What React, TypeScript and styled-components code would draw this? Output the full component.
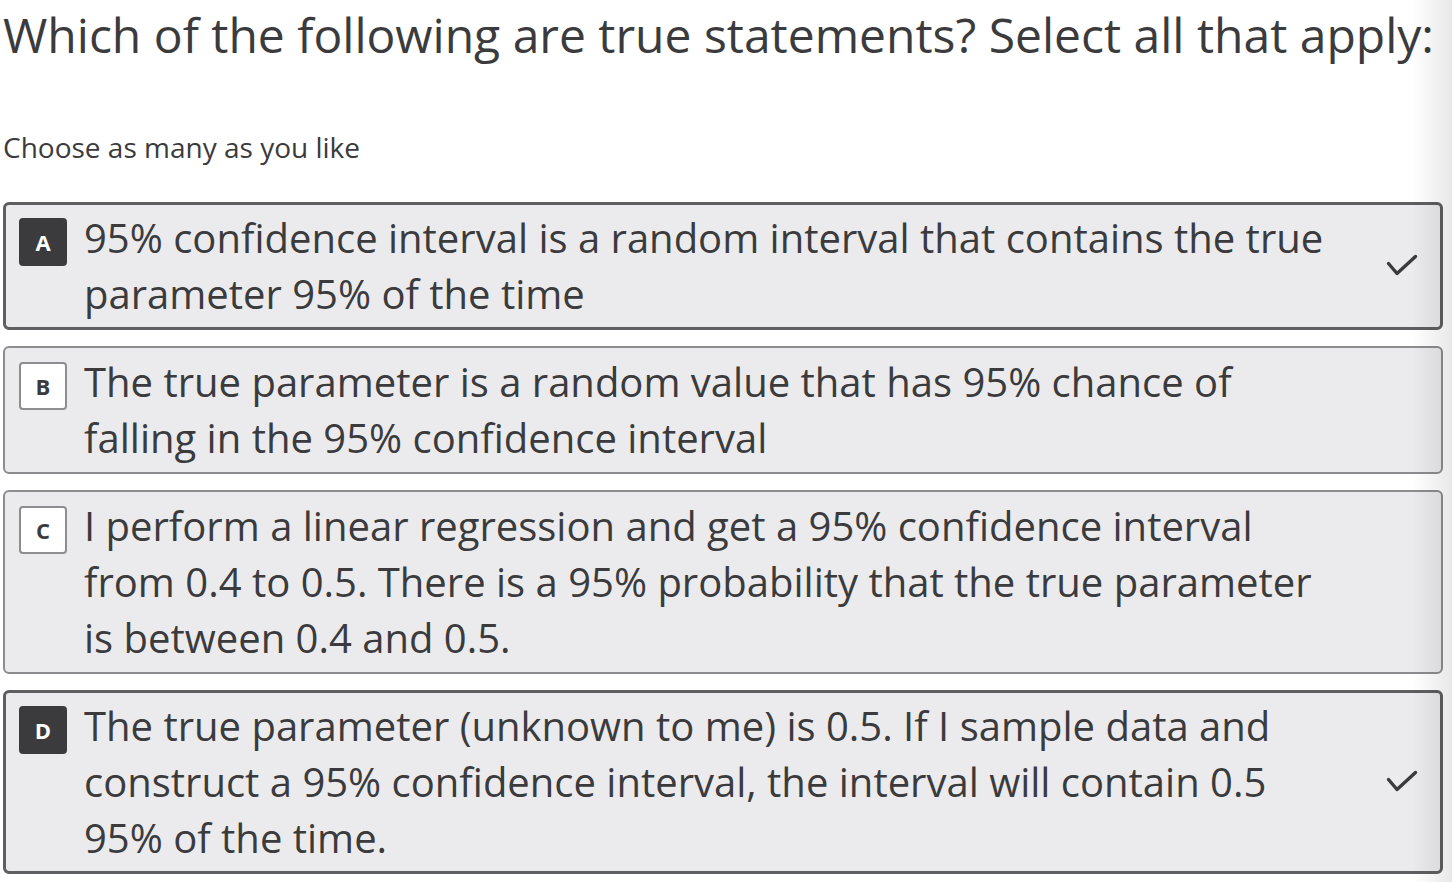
import React from 'react';
import styled, { createGlobalStyle } from 'styled-components';

const GlobalStyle = createGlobalStyle`
  html, body {
    margin: 0;
    padding: 0;
    background: #ffffff;
  }
  body {
    font-family: 'Open Sans', 'Noto Sans', sans-serif;
    color: #3b3b3d;
  }
`;

type Option = {
  letter: string;
  text: string;
  selected: boolean;
};

const options: Option[] = [
  {
    letter: 'A',
    text: '95% confidence interval is a random interval that contains the true parameter 95% of the time',
    selected: true,
  },
  {
    letter: 'B',
    text: 'The true parameter is a random value that has 95% chance of falling in the 95% confidence interval',
    selected: false,
  },
  {
    letter: 'C',
    text: 'I perform a linear regression and get a 95% confidence interval from 0.4 to 0.5. There is a 95% probability that the true parameter is between 0.4 and 0.5.',
    selected: false,
  },
  {
    letter: 'D',
    text: 'The true parameter (unknown to me) is 0.5. If I sample data and construct a 95% confidence interval, the interval will contain 0.5 95% of the time.',
    selected: true,
  },
];

const CheckIcon = () => (
  <svg width="32" height="24" viewBox="0 0 32 24" fill="none">
    <path
      d="M2.5 9.5 L11 19.5 L29.5 2.5"
      stroke="#3b3b3d"
      strokeWidth="3.4"
      strokeLinecap="round"
      strokeLinejoin="round"
    />
  </svg>
);

const App: React.FC = () => {
  return (
    <>
      <GlobalStyle />
      <Page>
        <Question>
          Which of the following are true statements? Select all that apply:
        </Question>
        <Hint>Choose as many as you like</Hint>
        <OptionList>
          {options.map((o) => (
            <Card key={o.letter} selected={o.selected}>
              <Badge selected={o.selected}>{o.letter}</Badge>
              <OptionText>{o.text}</OptionText>
              <CheckArea>{o.selected && <CheckIcon />}</CheckArea>
            </Card>
          ))}
        </OptionList>
      </Page>
      <EdgeShade />
    </>
  );
};

const Page = styled.div`
  padding: 0 9px 0 3px;
`;

const Question = styled.h1`
  margin: 0;
  padding: 0;
  font-size: 48px;
  font-weight: 400;
  line-height: 70px;
  letter-spacing: 0;
  color: #3b3b3d;
`;

const Hint = styled.p`
  margin: 58px 0 0 0;
  font-size: 28px;
  line-height: 38px;
  color: #3b3b3d;
`;

const OptionList = styled.div`
  display: flex;
  flex-direction: column;
  gap: 16px;
  margin-top: 36px;
`;

const Card = styled.div<{ selected: boolean }>`
  display: flex;
  align-items: center;
  box-sizing: border-box;
  background: #ebebed;
  border-radius: 6px;
  border: ${(p) => (p.selected ? '3px solid #5f5f61' : '2px solid #8d8d8f')};
  padding: ${(p) => (p.selected ? '5px 0 5px 13px' : '6px 0 6px 14px')};
`;

const Badge = styled.div<{ selected: boolean }>`
  flex: 0 0 auto;
  align-self: flex-start;
  box-sizing: border-box;
  width: 48px;
  height: 48px;
  margin-top: 8px;
  margin-right: 17px;
  border-radius: 4px;
  display: flex;
  align-items: center;
  justify-content: center;
  font-family: 'Open Sans', sans-serif;
  font-weight: 700;
  font-size: 22px;
  background: ${(p) => (p.selected ? '#3b3b3d' : '#ffffff')};
  color: ${(p) => (p.selected ? '#ffffff' : '#3b3b3d')};
  border: ${(p) => (p.selected ? 'none' : '2px solid #8d8d8f')};
`;

const OptionText = styled.div`
  flex: 1;
  font-size: 40px;
  line-height: 56px;
  color: #3b3b3d;
`;

const CheckArea = styled.div`
  flex: 0 0 92px;
  display: flex;
  justify-content: flex-end;
  padding-right: 22px;
  box-sizing: border-box;
`;

const EdgeShade = styled.div`
  position: fixed;
  top: 0;
  right: 0;
  width: 40px;
  height: 100%;
  pointer-events: none;
  background: linear-gradient(to right, rgba(0, 0, 0, 0), rgba(0, 0, 0, 0.09));
`;

export default App;
